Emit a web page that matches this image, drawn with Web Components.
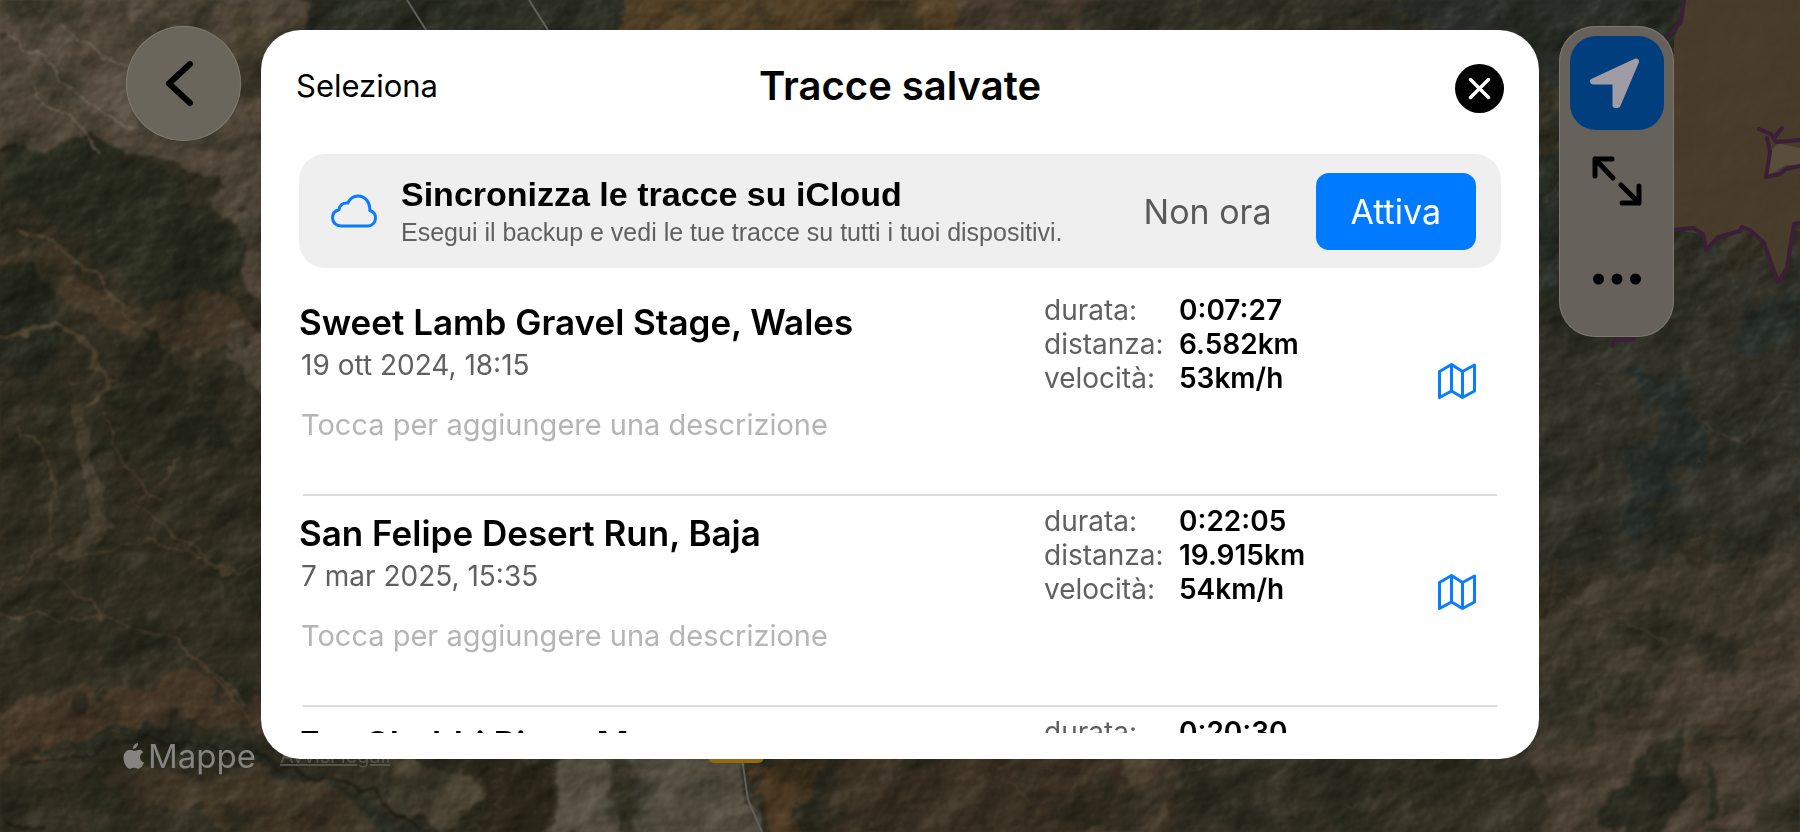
<!DOCTYPE html>
<html lang="it">
<head>
<meta charset="utf-8">
<meta name="viewport" content="width=device-width, initial-scale=1">
<title>Tracce salvate</title>
<style>
    html, body {
        margin: 0;
        height: 100%;
        overflow: hidden;
    }
    body {
        font-family: Inter, "Liberation Sans", sans-serif;
        color: #000;
        background: #37322a;
    }
</style>
</head>
<body>
<tracks-app>
    <satellite-map slot="map"></satellite-map>

    <round-button slot="left" label="Indietro">
        <svg width="115" height="115" viewBox="0 0 115 115" fill="none" stroke="#000" stroke-width="6" stroke-linecap="round" stroke-linejoin="round">
            <path d="M64 38 L43 57.500 L64 77"/>
        </svg>
    </round-button>

    <tracks-dialog heading="Tracce salvate">
        <cloud-banner slot="banner">
            <span slot="title">Sincronizza le tracce su iCloud</span>
            <span slot="text">Esegui il backup e vedi le tue tracce su tutti i tuoi dispositivi.</span>
        </cloud-banner>
        <track-row name="Sweet Lamb Gravel Stage, Wales" date="19 ott 2024, 18:15" durata="0:07:27" distanza="6.582km" velocita="53km/h"></track-row>
        <track-row name="San Felipe Desert Run, Baja" date="7 mar 2025, 15:35" durata="0:22:05" distanza="19.915km" velocita="54km/h"></track-row>
        <track-row name="Erg Chebbi Piste, Morocco" date="" durata="0:20:30" distanza="" velocita=""></track-row>
    </tracks-dialog>

    <map-tools slot="right"></map-tools>
</tracks-app>

<script>
// Página: mapa ao fundo, controles e diálogo por cima
class TracksApp extends HTMLElement {
    constructor() {
        super();
        this.attachShadow({ mode: "open" }).innerHTML = `
            <style>
                :host {
                    display: grid;
                    height: 100vh;
                    grid-template: minmax(0, 1fr) / minmax(0, 1fr);
                }
                .map, .layer { grid-area: 1 / 1; }
                .map { display: grid; overflow: hidden; }
                .layer {
                    display: flex;
                    align-items: flex-start;
                    gap: 20px;
                    padding: 26px 7% 73px;
                    z-index: 1;
                }
                .middle {
                    flex: 1;
                    min-width: 0;
                    align-self: stretch;
                    display: grid;
                    grid-template-rows: minmax(0, 1fr);
                    padding-top: 4px;
                }
            </style>
            <div class="map"><slot name="map"></slot></div>
            <div class="layer">
                <slot name="left"></slot>
                <main class="middle"><slot></slot></main>
                <slot name="right"></slot>
            </div>
        `;
    }
}

// Mapa de satélite: manchas de terreno deformadas por ruído + relevo
class SatelliteMap extends HTMLElement {
    constructor() {
        super();
        this.attachShadow({ mode: "open" }).innerHTML = `
            <style>
                :host { display: grid; position: relative; overflow: hidden; }
                .terrain { display: block; width: 100%; height: 100vh; }
                .credits {
                    position: absolute;
                    left: 123px;
                    bottom: 56px;
                    display: flex;
                    align-items: center;
                    gap: 24px;
                    line-height: 40px;
                }
                .brand {
                    display: flex;
                    align-items: center;
                    gap: 3px;
                    font-size: 33px;
                    color: #85837f;
                }
                a { font-size: 20px; line-height: 24px; color: #55544b; }
            </style>
            <svg class="terrain" viewBox="0 0 1800 832" preserveAspectRatio="xMidYMid slice" aria-hidden="true">
                <defs>
                    <filter id="warp" x="-5%" y="-5%" width="110%" height="110%" color-interpolation-filters="sRGB">
                        <feTurbulence type="fractalNoise" baseFrequency="0.018" numOctaves="5" seed="8" result="n"/>
                        <feDisplacementMap in="SourceGraphic" in2="n" scale="70" xChannelSelector="R" yChannelSelector="G"/>
                        <feGaussianBlur stdDeviation="1.500"/>
                    </filter>
                    <filter id="lines" x="-5%" y="-5%" width="110%" height="110%" color-interpolation-filters="sRGB">
                        <feTurbulence type="fractalNoise" baseFrequency="0.03" numOctaves="4" seed="3" result="n"/>
                        <feDisplacementMap in="SourceGraphic" in2="n" scale="26" xChannelSelector="R" yChannelSelector="G"/>
                        <feGaussianBlur stdDeviation="0.900"/>
                    </filter>
                    <filter id="relief" x="0" y="0" width="100%" height="100%" color-interpolation-filters="sRGB">
                        <feTurbulence type="fractalNoise" baseFrequency="0.016 0.022" numOctaves="5" seed="21" result="n"/>
                        <feColorMatrix in="n" values="0 0 0 0 0  0 0 0 0 0  0 0 0 0 0  1 0 0 0 0" result="h"/>
                        <feDiffuseLighting in="h" surfaceScale="6" lighting-color="#ffffff">
                            <feDistantLight azimuth="215" elevation="27"/>
                        </feDiffuseLighting>
                        <feGaussianBlur stdDeviation="1"/>
                    </filter>
                    <!-- veios claros e escuros -->
                    <filter id="veins" x="0" y="0" width="100%" height="100%" color-interpolation-filters="sRGB">
                        <feTurbulence type="turbulence" baseFrequency="0.010 0.013" numOctaves="4" seed="12"/>
                        <feColorMatrix values="0 0 0 0 0.420  0 0 0 0 0.340  0 0 0 0 0.250  -7 0 0 0 0.700"/>
                        <feGaussianBlur stdDeviation="0.700"/>
                    </filter>
                    <filter id="dark" x="0" y="0" width="100%" height="100%" color-interpolation-filters="sRGB">
                        <feTurbulence type="fractalNoise" baseFrequency="0.013 0.018" numOctaves="5" seed="33"/>
                        <feColorMatrix values="0 0 0 0 0.120  0 0 0 0 0.135  0 0 0 0 0.095  0 5 0 0 -2.500"/>
                        <feGaussianBlur stdDeviation="1"/>
                    </filter>
                </defs>
                <rect width="1800" height="832" fill="#343023"/>

                <g filter="url(#warp)">
                    <path fill="#51483a" d="M-40 -40 H330 V30 L300 230 L270 350 L240 250 L215 170 L150 150 L-40 145 Z"/>
                    <path fill="#62594b" d="M-10 10 L60 20 L110 70 L180 120 L90 112 L30 70 Z M100 -10 L170 10 L150 40 Z" opacity="0.600"/>
                    <path fill="#4d4433" d="M210 10 H330 V130 H255 Z"/>
                    <path fill="#2b2d20" d="M0 160 L60 138 L130 150 L170 175 L220 200 L218 215 L238 250 L228 300 L170 310 L90 250 L10 200 Z"/>
                    <path fill="#27291f" d="M-20 270 L40 290 L70 330 L30 370 L-20 350 Z"/>
                    <path fill="#4b3d2c" d="M0 262 L70 262 L130 302 L215 300 L250 340 L175 350 L100 320 L60 300 Z" opacity="0.800"/>
                    <path fill="#29291d" d="M140 322 L175 350 L190 400 L240 440 L200 470 L90 460 L110 390 Z"/>
                    <path fill="#544b3d" d="M225 330 L300 320 L300 420 L240 400 Z" opacity="0.700"/>
                    <path fill="#2e3026" d="M306 -40 H625 L605 60 H306 Z"/>
                    <path fill="#544228" d="M625 -40 H975 V60 H610 Z"/>
                    <path fill="#493e30" d="M970 -40 H1115 L1080 60 H970 Z"/>
                    <path fill="#343227" d="M1110 -40 H1570 V60 H1080 Z"/>
                    <path fill="#2b312a" d="M1390 10 L1480 -40 L1690 -40 L1690 50 L1580 80 L1540 60 V380 L1570 330 L1560 120 Z"/>
                    <path fill="#34342a" d="M1530 300 L1680 220 L1740 270 L1850 240 V560 L1530 560 Z"/>
                    <path fill="#2a312b" d="M1750 290 L1790 290 L1785 345 L1740 340 Z M1530 220 L1565 215 L1560 300 Z"/>
                    <path fill="#29302b" d="M1645 370 L1665 375 L1675 410 L1700 435 L1680 480 L1650 510 L1632 545 L1625 520 L1640 470 L1660 440 Z"/>
                    <path fill="#3f3a2d" d="M1530 620 L1620 560 L1700 570 L1850 520 V880 L1530 880 Z"/>
                    <path fill="#4a4033" d="M1530 760 L1640 700 L1740 640 L1850 560 V640 L1760 760 L1740 880 H1530 Z"/>
                    <path fill="#2f2e22" d="M1620 800 L1660 745 L1690 725 L1700 735 L1670 800 L1650 860 L1610 860 Z M1700 800 L1715 760 L1720 800 L1705 850 Z"/>
                    <path fill="#4a3b2a" d="M0 700 L120 690 L190 672 L260 720 L300 750 L190 720 L90 740 L-10 780 Z" opacity="0.900"/>
                    <path fill="#2b2d22" d="M30 752 L130 724 L180 730 L240 748 L300 772 L360 785 L410 830 L470 850 L380 850 L320 800 L230 760 L130 742 Z"/>
                    <path fill="#483c2b" d="M100 770 L250 770 L330 790 L400 850 L240 850 L200 800 L110 800 Z" opacity="0.700"/>
                    <path fill="#58503f" d="M400 770 L460 760 L480 810 L440 832 L390 800 Z" opacity="0.700"/>
                    <path fill="#2d281b" d="M470 740 H550 L545 870 H490 Z"/>
                    <path fill="#575144" d="M560 740 H740 L755 790 L750 870 H550 Z"/>
                    <path fill="#3c3829" d="M590 740 L620 740 L650 800 L640 870 L620 790 Z" opacity="0.800"/>
                    <path fill="#503c25" d="M762 740 H815 V870 H775 Z"/>
                    <path fill="#3c3224" d="M830 750 H1180 L1160 870 H830 Z"/>
                    <path fill="#554a3a" d="M1130 745 L1200 745 L1150 830 L1090 870 Z" opacity="0.700"/>
                    <path fill="#353125" d="M1200 745 H1530 V870 H1170 Z"/>
                </g>

                <rect width="1800" height="832" filter="url(#dark)" opacity="0.450"/>
                <rect width="1800" height="832" filter="url(#veins)" opacity="0.300"/>

                <g filter="url(#lines)" fill="none" stroke="#5a4a37" stroke-width="2" opacity="0.700">
                    <path stroke-width="14" stroke="#4e4535" d="M80 400 L85 480 L105 520 L60 560"/>
                    <path d="M0 590 L50 550 L60 480 L20 420 M50 560 L150 540 L240 570 L300 540"/>
                    <path d="M130 500 L190 545 L230 570 M180 460 L140 500 M0 620 L100 615 L180 640 L250 720"/>
                    <path d="M100 615 L60 580 M180 640 L200 660 L250 710 M110 420 L130 470 L160 500"/>
                    <path d="M0 340 L60 322 L110 380 L90 410 M20 230 L90 270 L140 320" stroke-width="4"/>
                    <path stroke="#7a7060" d="M10 30 L60 70 L80 100 L140 130 M60 20 L100 60 L150 70 L190 110 M30 90 L70 115 L100 150"/>
                    <path stroke="#1c1b14" stroke-width="4" d="M20 765 L130 738 L220 745 L300 770 L370 788 L420 832 M0 815 L50 832"/>
                    <path stroke="#4c3d2b" d="M960 770 L1010 785 L1040 820 L1000 832 M1480 770 L1530 700 L1560 560"/>
                    <path stroke="#4d4638" d="M1545 200 L1570 170 M1550 590 L1620 620 L1670 640 M1700 420 L1740 440 L1790 390"/>
                </g>

                <rect width="1800" height="832" filter="url(#relief)" style="mix-blend-mode: soft-light" opacity="0.550"/>

                <!-- planalto com a fronteira -->
                <path fill="#4c3e2b" opacity="0.850" d="M1683 0 H1800 V223 L1794 224 L1787 268 L1778 282 L1764 243 L1742 228 L1718 237 L1706 250 L1703 234 L1674 230 V38 L1681 22 Z"/>
                <path fill="#645a47" d="M1770 152 L1778 143 L1800 148 V166 L1786 165 L1766 177 Z" opacity="0.600"/>
                <g fill="none" stroke="#3b1e38" stroke-width="4" stroke-linejoin="round" stroke-linecap="round">
                    <path d="M1684 0 L1681 22 L1666 38"/>
                    <path d="M1674 230 L1693 228 L1703 234 L1706 250 L1718 237 L1740 231 L1742 227 L1750 230 L1764 243 L1778 282 L1787 268 L1789 255 L1794 224 L1800 223"/>
                    <path d="M1759 129 L1771 134 L1776 142 L1800 140 M1782 128 L1774 138 M1767 138 L1770 152 L1766 177 L1780 174 L1786 169 L1800 166"/>
                    <path d="M1612 346 L1614 340 L1634 339"/>
                </g>
                <path d="M407 0 L426 30 M529 0 L548 30 M742 758 L748 800 L762 832" fill="none" stroke="#625e59" stroke-width="2"/>
                <rect x="708" y="735" width="56" height="28" rx="6" fill="#8f6a10"/>
            </svg>
            <div class="credits">
                <span class="brand">
                    <svg width="22" height="26" viewBox="0 0 22 26" fill="#85837f" aria-hidden="true">
                        <path d="M15 0 C15.300 3 12.500 6 9.800 6 C9.500 3.200 12.200 0.300 15 0 Z"/>
                        <path d="M20 9.300 C18 10.500 17 12.200 17 14.200 C17 16.700 18.500 18.700 21 19.600 C20 22.400 17.800 25.800 15.500 25.800 C13.800 25.800 13.200 24.800 11.200 24.800 C9.200 24.800 8.500 25.800 7 25.800 C4 25.800 0.500 20.500 0.500 14.800 C0.500 9.500 3.800 6.800 7 6.800 C8.900 6.800 10.300 8 11.500 8 C12.600 8 14.300 6.700 16.500 6.700 C17.400 6.700 19 7.200 20 9.300 Z"/>
                    </svg>
                    <span>Mappe</span>
                </span>
                <a href="#legal">Avvisi legali</a>
            </div>
        `;
    }
}

class RoundButton extends HTMLElement {
    constructor() {
        super();
        this.attachShadow({ mode: "open" }).innerHTML = `
            <style>
                :host { display: block; flex: none; }
                button {
                    display: grid;
                    place-items: center;
                    width: 115px;
                    height: 115px;
                    padding: 0;
                    border: 0;
                    border-radius: 50%;
                    background: #6b665c;
                    box-shadow: inset 0 0 0 1px #7d796f;
                }
            </style>
            <button type="button" aria-label="${this.getAttribute("label")}"><slot></slot></button>
        `;
    }
}

// Barra de ferramentas à direita do mapa
class MapTools extends HTMLElement {
    constructor() {
        super();
        this.attachShadow({ mode: "open" }).innerHTML = `
            <style>
                :host {
                    display: flex;
                    flex: none;
                    flex-direction: column;
                    align-items: center;
                    gap: 4px;
                    width: 115px;
                    box-sizing: border-box;
                    padding: 10px 0 11px;
                    border-radius: 36px;
                    background: #66615a;
                    box-shadow: inset 0 0 0 1px #7c786f;
                }
                button {
                    display: grid;
                    place-items: center;
                    width: 94px;
                    height: 94px;
                    padding: 0;
                    border: 0;
                    border-radius: 26px;
                    background: none;
                }
                .active { background: #003e7e; }
            </style>
            <button type="button" class="active" aria-label="Posizione">
                <svg width="94" height="94" viewBox="0 0 94 94" fill="#9f9ca6" stroke="#9f9ca6" stroke-width="6" stroke-linejoin="round">
                    <path d="M66 25.500 L23 45.500 H45.500 V69 H47.500 Z"/>
                </svg>
            </button>
            <button type="button" aria-label="Espandi">
                <svg width="52" height="52" viewBox="0 0 52 52" fill="none" stroke="#000" stroke-width="5" stroke-linecap="round" stroke-linejoin="round">
                    <path d="M21 4 H4 V21 M4 4 L22 23"/>
                    <path d="M31 48 H48 V31 M48 48 L30 30"/>
                </svg>
            </button>
            <button type="button" aria-label="Altro">
                <svg width="48" height="12" viewBox="0 0 48 12">
                    <circle cx="5.500" cy="6" r="5.500"/><circle cx="24" cy="6" r="5.500"/><circle cx="42.500" cy="6" r="5.500"/>
                </svg>
            </button>
        `;
    }
}

class TracksDialog extends HTMLElement {
    constructor() {
        super();
        this.attachShadow({ mode: "open" }).innerHTML = `
            <style>
                :host {
                    display: flex;
                    flex-direction: column;
                    min-height: 0;
                    box-sizing: border-box;
                    padding-bottom: 26px;
                    border-radius: 40px;
                    background: #fff;
                }
                header {
                    display: grid;
                    grid-template-columns: 1fr auto 1fr;
                    align-items: center;
                    min-height: 112px;
                    padding: 0 35px 12px;
                }
                button { padding: 0; border: 0; background: none; font: inherit; color: inherit; }
                .select { justify-self: start; font-size: 31px; line-height: 40px; }
                h1 { margin: 0; font-size: 40px; line-height: 50px; font-weight: 600; }
                .close { justify-self: end; width: 49px; height: 49px; padding-top: 4px; box-sizing: content-box; }
                .close svg { display: block; }
                .banner { padding: 0 38px 17px; }
                .list { flex: 1; min-height: 0; overflow: hidden; padding: 0 38px; }
            </style>
            <header>
                <button type="button" class="select">Seleziona</button>
                <h1>${this.getAttribute("heading")}</h1>
                <button type="button" class="close" aria-label="Chiudi">
                    <svg width="49" height="49" viewBox="0 0 49 49">
                        <circle cx="24.500" cy="24.500" r="24.500"/>
                        <path d="M15.500 15.500 L33.500 33.500 M33.500 15.500 L15.500 33.500" stroke="#fff" stroke-width="3.500" stroke-linecap="round"/>
                    </svg>
                </button>
            </header>
            <div class="banner"><slot name="banner"></slot></div>
            <div class="list"><slot></slot></div>
        `;
    }
}

class CloudBanner extends HTMLElement {
    constructor() {
        super();
        this.attachShadow({ mode: "open" }).innerHTML = `
            <style>
                :host {
                    display: flex;
                    align-items: center;
                    min-height: 114px;
                    box-sizing: border-box;
                    padding: 0 25px 0 32px;
                    border-radius: 26px;
                    background: #efefef;
                }
                svg { flex: none; }
                .text { flex: 1; min-width: 0; padding-left: 24px; font-family: "Liberation Sans", Arial, sans-serif; white-space: nowrap; }
                h2 { margin: 0; font-size: 34px; line-height: 42px; font-weight: 700; }
                p { margin: 0; font-size: 25px; line-height: 34px; color: #606060; }
                button { flex: none; padding: 0; border: 0; background: none; font: inherit; font-size: 34px; line-height: 77px; }
                .later { margin-right: 44px; color: #5a5a5a; }
                .enable { padding: 0 35px; border-radius: 13px; background: #007aff; color: #fff; }
            </style>
            <svg width="46" height="34" viewBox="0 0 46 34" fill="none" stroke="#0a7cff" stroke-width="3" stroke-linejoin="round" aria-hidden="true">
                <path d="M10.500 32 C5 32 1.500 28.500 1.500 23.800 C1.500 19.800 4 16.800 8 15.800 C8.500 11 12 8.500 16.800 9 C19 4.500 22.500 2 27 2 C33.500 2 38.500 7 38.800 14.500 L38.800 16.500 C42.500 17.500 44.500 20.500 44.500 24 C44.500 28.500 41 32 36.500 32 Z"/>
            </svg>
            <div class="text">
                <h2><slot name="title"></slot></h2>
                <p><slot name="text"></slot></p>
            </div>
            <button type="button" class="later">Non ora</button>
            <button type="button" class="enable">Attiva</button>
        `;
    }
}

// Uma linha da lista de percursos
class TrackRow extends HTMLElement {
    constructor() {
        super();
        const name = this.getAttribute("name");
        this.attachShadow({ mode: "open" }).innerHTML = `
            <style>
                :host { display: block; }
                article {
                    display: flex;
                    height: 211px;
                    box-sizing: border-box;
                    margin: 0 4px;
                    border-bottom: 2px solid #dcdcdc;
                }
                .main { flex: 1; min-width: 0; padding-top: 12px; margin-left: -2px; }
                h3 { margin: 0 0 0 -2px; font-size: 35px; line-height: 50px; font-weight: 600; white-space: nowrap; }
                time { display: block; font-size: 28px; line-height: 36px; color: #606060; }
                input {
                    display: block;
                    width: 100%;
                    margin: 23px 0 0;
                    padding: 0;
                    border: 0;
                    background: none;
                    font: inherit;
                    font-size: 29px;
                    line-height: 38px;
                }
                input::placeholder { color: #b5b5b5; opacity: 1; }
                dl {
                    display: grid;
                    grid-template-columns: 135px 259px;
                    grid-auto-rows: 34px;
                    margin: 0;
                    padding-top: 8px;
                    font-size: 28px;
                    line-height: 34px;
                }
                dt { color: #606060; }
                dd { margin: 0; font-weight: 600; }
                button { align-self: flex-start; margin: 78px 21px 0 0; padding: 0; border: 0; background: none; }
                svg { display: block; }
            </style>
            <article>
                <div class="main">
                    <h3>${name}</h3>
                    <time>${this.getAttribute("date")}</time>
                    <input type="text" aria-label="Descrizione di ${name}" placeholder="Tocca per aggiungere una descrizione">
                </div>
                <dl>
                    <dt>durata:</dt><dd>${this.getAttribute("durata")}</dd>
                    <dt>distanza:</dt><dd>${this.getAttribute("distanza")}</dd>
                    <dt>velocità:</dt><dd>${this.getAttribute("velocita")}</dd>
                </dl>
                <button type="button" aria-label="Mostra ${name} sulla mappa">
                    <svg width="38" height="36" viewBox="0 0 38 36" fill="none" stroke="#0a7cff" stroke-width="3" stroke-linejoin="round">
                        <path d="M1.500 8.500 L13.500 1.500 L24.500 8.500 L36.500 2 V28 L24.500 34.500 L13.500 28 L1.500 34.500 Z M13.500 1.500 V28 M24.500 8.500 V34.500"/>
                    </svg>
                </button>
            </article>
        `;
    }
}

customElements.define("tracks-app", TracksApp);
customElements.define("satellite-map", SatelliteMap);
customElements.define("round-button", RoundButton);
customElements.define("map-tools", MapTools);
customElements.define("tracks-dialog", TracksDialog);
customElements.define("cloud-banner", CloudBanner);
customElements.define("track-row", TrackRow);
</script>
</body>
</html>
